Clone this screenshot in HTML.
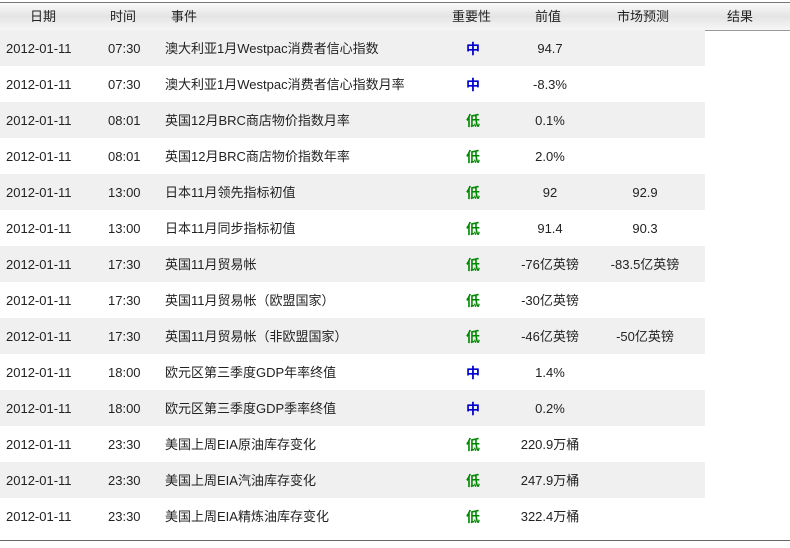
<!DOCTYPE html><html><head><meta charset="utf-8"><style>
body{margin:0;background:#fff;font-family:"Liberation Sans","Noto Sans CJK SC",sans-serif;font-size:13px;color:#222;width:790px;height:548px;position:relative;overflow:hidden}
.hd{position:absolute;left:0;top:2px;width:790px;height:27px;border-top:1px solid #777;border-bottom:1px solid #999;background:linear-gradient(#fafafa,#e4e4e4 50%,#f6f6f6)}
.r{position:absolute;left:0;height:36px;width:705px;line-height:38px}
.g{background:#f0f0f0}
.c{position:absolute;top:0;white-space:nowrap}
.h{line-height:28px;color:#222}
.m{color:#0000cc;font-weight:bold;font-size:14px}.l{color:#008800;font-weight:bold;font-size:14px}
.bl{position:absolute;left:0;top:540px;width:790px;height:1px;background:#666}
</style></head><body>
<div class="hd">
<span class="c h" style="left:30px">日期</span><span class="c h" style="left:110px">时间</span><span class="c h" style="left:171px">事件</span><span class="c h" style="left:452px">重要性</span><span class="c h" style="left:535px">前值</span><span class="c h" style="left:617px">市场预测</span><span class="c h" style="left:727px">结果</span>
</div>
<div id="rows"></div>
<div class="bl"></div>
<script>
var d=[["07:30","澳大利亚1月Westpac消费者信心指数","m","94.7",""],["07:30","澳大利亚1月Westpac消费者信心指数月率","m","-8.3%",""],["08:01","英国12月BRC商店物价指数月率","l","0.1%",""],["08:01","英国12月BRC商店物价指数年率","l","2.0%",""],["13:00","日本11月领先指标初值","l","92","92.9"],["13:00","日本11月同步指标初值","l","91.4","90.3"],["17:30","英国11月贸易帐","l","-76亿英镑","-83.5亿英镑"],["17:30","英国11月贸易帐（欧盟国家）","l","-30亿英镑",""],["17:30","英国11月贸易帐（非欧盟国家）","l","-46亿英镑","-50亿英镑"],["18:00","欧元区第三季度GDP年率终值","m","1.4%",""],["18:00","欧元区第三季度GDP季率终值","m","0.2%",""],["23:30","美国上周EIA原油库存变化","l","220.9万桶",""],["23:30","美国上周EIA汽油库存变化","l","247.9万桶",""],["23:30","美国上周EIA精炼油库存变化","l","322.4万桶",""]];
var h="";d.forEach(function(r,i){h+='<div class="r'+(i%2==0?' g':'')+'" style="top:'+(30+36*i)+'px"><span class="c" style="left:6px">2012-01-11</span><span class="c" style="left:108px">'+r[0]+'</span><span class="c" style="left:165px">'+r[1]+'</span><span class="c '+r[2]+'" style="left:466px">'+(r[2]=="m"?"中":"低")+'</span><span class="c" style="left:500px;width:100px;text-align:center">'+r[3]+'</span><span class="c" style="left:595px;width:100px;text-align:center">'+r[4]+'</span></div>'});
document.getElementById("rows").innerHTML=h;
</script>
</body></html>
